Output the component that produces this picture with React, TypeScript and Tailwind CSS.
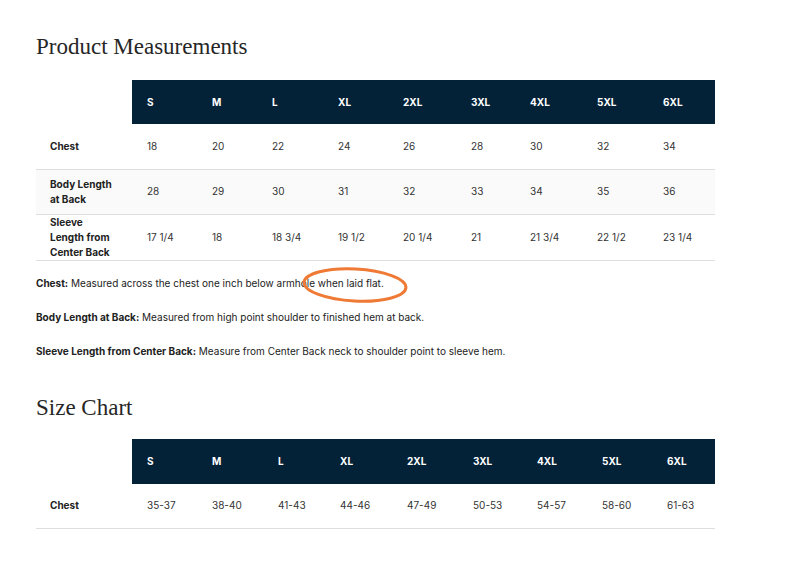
import React from "react";

const sizes = ["S", "M", "L", "XL", "2XL", "3XL", "4XL", "5XL", "6XL"];

const measureCols = [65, 60, 66, 65, 68, 59, 67, 66, 67];
const chartCols = [65, 66, 62, 67, 66, 64, 65, 65, 63];

const measureRows = [
  { label: "Chest", values: ["18", "20", "22", "24", "26", "28", "30", "32", "34"], bg: "bg-white" },
  { label: "Body Length at Back", values: ["28", "29", "30", "31", "32", "33", "34", "35", "36"], bg: "bg-[#fafafa]" },
  {
    label: "Sleeve Length from Center Back",
    values: ["17 1/4", "18", "18 3/4", "19 1/2", "20 1/4", "21", "21 3/4", "22 1/2", "23 1/4"],
    bg: "bg-white",
  },
];

const chartRows = [
  { label: "Chest", values: ["35-37", "38-40", "41-43", "44-46", "47-49", "50-53", "54-57", "58-60", "61-63"], bg: "bg-white" },
];

function SizeTable({
  cols,
  rows,
  headH,
}: {
  cols: number[];
  rows: { label: string; values: string[]; bg: string }[];
  headH: string;
}) {
  return (
    <table className="table-fixed border-collapse w-[679px] text-[10px] leading-[15px]">
      <colgroup>
        <col style={{ width: 96 }} />
        {cols.map((w, i) => (
          <col key={i} style={{ width: w }} />
        ))}
      </colgroup>
      <thead>
        <tr className={headH}>
          <th className="bg-white"></th>
          {sizes.map((s) => (
            <th key={s} className="bg-[#032137] text-white font-bold text-left pl-[15px]">
              {s}
            </th>
          ))}
        </tr>
      </thead>
      <tbody>
        {rows.map((r) => (
          <tr key={r.label} className={`h-[45px] ${r.bg} border-b border-[#dedede]`}>
            <td className="pl-[14px] pr-[18px] font-bold text-[#222] align-middle">{r.label}</td>
            {r.values.map((v, j) => (
              <td key={j} className="pl-[15px] text-[#333] align-middle">
                {v}
              </td>
            ))}
          </tr>
        ))}
      </tbody>
    </table>
  );
}

export default function App() {
  return (
    <div className="w-[792px] h-[561px] bg-white pl-[36px] pt-[33px] font-['Inter',sans-serif] text-[#222]">
      <h2 className="font-['Liberation_Serif',serif] text-[23px] leading-[28px] text-[#262626]">Product Measurements</h2>

      <div className="mt-[19px]">
        <SizeTable cols={measureCols} rows={measureRows} headH="h-[44px]" />
      </div>

      <div className="relative mt-[15px] text-[10px] leading-[14px] text-[#222]">
        <p>
          <b>Chest:</b> Measured across the chest one inch below armhole when laid flat.
        </p>
        <p className="mt-[20px]">
          <b>Body Length at Back:</b> Measured from high point shoulder to finished hem at back.
        </p>
        <p className="mt-[20px]">
          <b>Sleeve Length from Center Back:</b> Measure from Center Back neck to shoulder point to sleeve hem.
        </p>
        <svg className="absolute left-[266px] top-[-10px]" width="110" height="40" viewBox="0 0 110 40">
          <ellipse cx="53" cy="19" rx="51" ry="16" fill="none" stroke="#ef7a35" strokeWidth="3" transform="rotate(3 53 19)" />
        </svg>
      </div>

      <h2 className="mt-[36px] font-['Liberation_Serif',serif] text-[23px] leading-[28px] text-[#262626]">Size Chart</h2>

      <div className="mt-[17px]">
        <SizeTable cols={chartCols} rows={chartRows} headH="h-[45px]" />
      </div>
    </div>
  );
}
